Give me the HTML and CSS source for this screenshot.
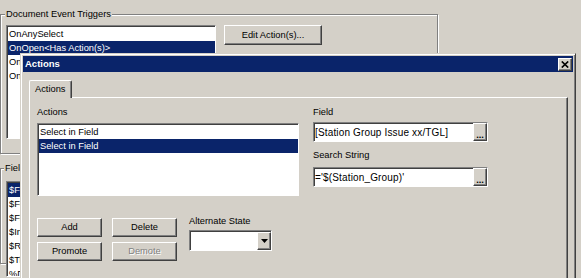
FILE: index.html
```html
<!DOCTYPE html>
<html lang="en">
<head>
    <meta charset="UTF-8">
    <title>Actions</title>
    <link rel="stylesheet" href="styles.css">
</head>
<body>
    <div class="window">
        <div class="group group-triggers">
            <span class="group-label">Document Event Triggers</span>
            <div class="trigger-row">
                <div class="listbox triggers-list">
                    <div class="item">OnAnySelect</div>
                    <div class="item selected">OnOpen&lt;Has Action(s)&gt;</div>
                    <div class="item">OnClose</div>
                    <div class="item">OnPrint</div>
                </div>
                <button class="btn edit-btn">Edit Action(s)...</button>
            </div>
        </div>
        <div class="group group-fields">
            <span class="group-label">Field Event Triggers</span>
            <div class="listbox fields-list">
                <div class="item selected">$Field1</div>
                <div class="item">$Form</div>
                <div class="item">$Flags</div>
                <div class="item">$Index</div>
                <div class="item">$Revisions</div>
                <div class="item">$Title</div>
                <div class="item">%Date</div>
            </div>
        </div>
    </div>

    <div class="dialog">
        <div class="titlebar">
            <span>Actions</span>
            <button class="btn close-btn">
                <svg width="8" height="7" viewBox="0 0 8 7"><path d="M0.8 0.5 L7.2 6.5 M7.2 0.5 L0.8 6.5" stroke="#000" stroke-width="1.7" fill="none"/></svg>
            </button>
        </div>
        <div class="dialog-body">
            <div class="tabs">
                <div class="tab">Actions</div>
            </div>
            <div class="panel">
                <div class="panel-top">
                    <div class="col-actions">
                        <div class="label">Actions</div>
                        <div class="listbox actions-list">
                            <div class="item">Select in Field</div>
                            <div class="item selected">Select in Field</div>
                        </div>
                    </div>
                    <div class="col-field">
                        <div class="label">Field</div>
                        <div class="input">
                            <span class="input-text">[Station Group Issue xx/TGL]</span>
                            <button class="btn browse">...</button>
                        </div>
                        <div class="label search-label">Search String</div>
                        <div class="input search-input">
                            <span class="input-text">='$(Station_Group)'</span>
                            <button class="btn browse">...</button>
                        </div>
                    </div>
                </div>
                <div class="panel-bottom">
                    <div class="btn-grid">
                        <button class="btn">Add</button>
                        <button class="btn">Delete</button>
                        <button class="btn">Promote</button>
                        <button class="btn disabled">Demote</button>
                    </div>
                    <div class="alt-state">
                        <div class="label">Alternate State</div>
                        <div class="combo">
                            <button class="btn drop-btn">
                                <svg width="7" height="4" viewBox="0 0 7 4"><path d="M0 0 H7 L3.5 4 Z" fill="#000"/></svg>
                            </button>
                        </div>
                    </div>
                </div>
            </div>
        </div>
    </div>
</body>
</html>
```

FILE: styles.css
```css
* {
    box-sizing: border-box;
}
body {
    margin: 0;
    width: 581px;
    height: 278px;
    overflow: hidden;
    position: relative;
    background: #d4d0c8;
    font-family: "Liberation Sans", Arial, sans-serif;
    font-size: 9.3px;
    line-height: 11px;
    color: #000;
}
.window {
    padding-top: 14px;
}
.group {
    position: relative;
    width: 438px;
    border: 1px solid #808080;
    box-shadow: inset 1px 1px 0 #fff, 1px 1px 0 #fff;
}
.group-label {
    position: absolute;
    top: -6px;
    left: 4px;
    padding: 0 1px;
    background: #d4d0c8;
    white-space: nowrap;
}
.group-fields .group-label {
    left: 3px;
}
.group-triggers {
    height: 140px;
    padding: 10px 0 0 5px;
}
.group-fields {
    margin-top: 14px;
    height: 96px;
    padding: 12px 0 0 5px;
}
.trigger-row {
    display: flex;
    align-items: flex-start;
    gap: 8px;
}
.listbox {
    background: #fff;
    border: 1px solid;
    border-color: #808080 #fff #fff #808080;
    box-shadow: inset 1px 1px 0 #404040;
    padding: 1px 0 0 1px;
    overflow: hidden;
}
.triggers-list {
    width: 210px;
    height: 114px;
}
.fields-list {
    width: 210px;
    height: 96px;
}
.item {
    height: 14px;
    line-height: 14px;
    padding-left: 1px;
    white-space: nowrap;
}
.item.selected {
    background: #0a246a;
    color: #fff;
}
.btn {
    font: inherit;
    color: #000;
    background: #d4d0c8;
    border: 1px solid;
    border-color: #fff #404040 #404040 #fff;
    box-shadow: inset -1px -1px 0 #808080;
    padding: 0;
    margin: 0;
}
.btn.disabled {
    color: #808080;
    text-shadow: 1px 1px 0 #fff;
}
.edit-btn {
    width: 98px;
    height: 20px;
}

/* dialog window */
.dialog {
    position: absolute;
    left: 20px;
    top: 53px;
    width: 556px;
    height: 232px;
    background: #d4d0c8;
    border: 1px solid;
    border-color: #d4d0c8 #404040 #404040 #d4d0c8;
    box-shadow: inset 1px 1px 0 #fff, inset -1px -1px 0 #808080;
    padding: 2px;
    overflow: hidden;
}
.titlebar {
    height: 16px;
    background: #0a246a;
    color: #fff;
    font-weight: bold;
    font-size: 9.5px;
    line-height: 16px;
    display: flex;
    align-items: center;
    justify-content: space-between;
    padding: 0 1px 0 2px;
}
.close-btn {
    width: 14px;
    height: 13px;
    display: flex;
    align-items: center;
    justify-content: center;
}
.dialog-body {
    padding: 8px 5px 0 6px;
}
.tabs {
    display: flex;
}
.tab {
    position: relative;
    z-index: 1;
    margin-bottom: -1px;
    background: #d4d0c8;
    border: 1px solid;
    border-color: #fff #404040 transparent #fff;
    border-bottom: 0;
    border-radius: 2px 2px 0 0;
    box-shadow: inset -1px 0 0 #808080;
    padding: 1px 5px 1px;
    line-height: 15px;
}
.panel {
    height: 190px;
    border: 1px solid;
    border-color: #fff #404040 #404040 #fff;
    box-shadow: inset -1px -1px 0 #808080;
    padding: 9px 7px;
}
.panel-top {
    display: flex;
    gap: 14px;
}
.col-actions {
    width: 262px;
}
.actions-list {
    margin-top: 5px;
    height: 73px;
}
.col-field {
    width: 175px;
}
.label {
    white-space: nowrap;
}
.input {
    display: flex;
    margin-top: 4px;
    height: 20px;
    background: #fff;
    border: 1px solid;
    border-color: #808080 #fff #fff #808080;
    box-shadow: inset 1px 1px 0 #404040;
    padding: 1px 0 0 1px;
}
.input-text {
    flex: 1;
    font-size: 10px;
    letter-spacing: 0.15px;
    line-height: 17px;
    white-space: nowrap;
    overflow: hidden;
}
.browse {
    width: 14px;
    margin-top: -1px;
    display: flex;
    align-items: flex-end;
    justify-content: center;
    font-weight: bold;
    line-height: 8px;
    padding-bottom: 1px;
}
.search-label {
    margin-top: 8px;
}
.search-input {
    margin-top: 6px;
}
.panel-bottom {
    display: flex;
    gap: 12px;
    margin-top: 20px;
}
.btn-grid {
    display: grid;
    grid-template-columns: 65px 65px;
    grid-auto-rows: 19px;
    gap: 5px 10px;
    margin-top: 2px;
}
.combo {
    margin-top: 3px;
    width: 83px;
    height: 21px;
    display: flex;
    justify-content: flex-end;
    background: #fff;
    border: 1px solid;
    border-color: #808080 #fff #fff #808080;
    box-shadow: inset 1px 1px 0 #404040;
    padding: 1px 0 0 1px;
}
.drop-btn {
    width: 14px;
    display: flex;
    align-items: center;
    justify-content: center;
}
```
